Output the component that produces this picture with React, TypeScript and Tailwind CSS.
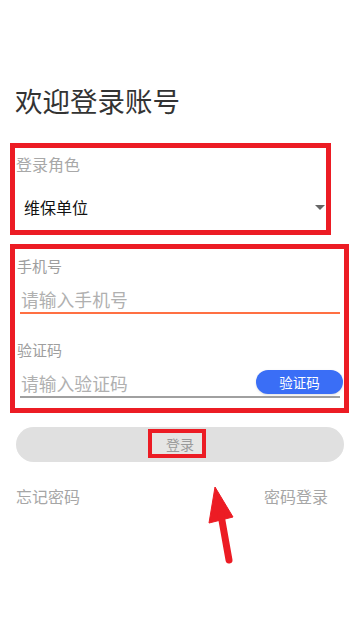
const font = { fontFamily: '"Noto Sans CJK SC", "Noto Sans", sans-serif' };

const Field = ({
  label,
  placeholder,
  line,
  action,
}: {
  label: string;
  placeholder: string;
  line: string;
  action?: string;
}) => (
  <div>
    <div className="pl-[2px] h-[20px] leading-[20px] text-[15px] text-[#9e9e9e]">{label}</div>
    <div className={`ml-[5px] mr-[4px] mt-[10px] flex items-center h-[28px] border-b-2 ${line}`}>
      <input
        className="flex-1 min-w-0 h-full pl-[1px] text-[17.8px] text-[#333] placeholder:text-[#b0b0b0] outline-none bg-transparent"
        placeholder={placeholder}
      />
      {action && (
        <button className="-mr-[3px] mb-[2px] w-[87px] h-[24px] rounded-full bg-[#3a6ef6] text-white text-[13.5px] leading-[24px] shadow-sm">
          {action}
        </button>
      )}
    </div>
  </div>
);

export default function App() {
  return (
    <div className="relative w-[360px] h-[619px] bg-white overflow-hidden" style={font}>
      <h1 className="pt-[83px] pl-[15px] h-[117px] leading-[34px] text-[27.5px] font-normal text-[#333]">
        欢迎登录账号
      </h1>

      <div className="mt-[26px] ml-[10px] w-[321px] h-[92px] border-[5px] border-[#ec1c24] pt-[6px] pl-[1px]">
        <div className="h-[20px] leading-[20px] text-[16px] text-[#a8a8a8]">登录角色</div>
        <div className="mt-[23px] h-[20px] flex items-center justify-between pl-[8px] pr-[1px]">
          <span className="text-[16px] leading-[20px] text-[#111]">维保单位</span>
          <svg width="10" height="5" viewBox="0 0 10 5">
            <path d="M0 0 H10 L5 5 Z" fill="#666" />
          </svg>
        </div>
      </div>

      <div className="mt-[9px] ml-[10px] w-[339px] h-[169px] border-[5px] border-[#ec1c24] pt-[7px]">
        <Field label="手机号" placeholder="请输入手机号" line="border-[#ff7043]" />
        <div className="mt-[26px]">
          <Field label="验证码" placeholder="请输入验证码" line="border-[#a0a0a0]" action="验证码" />
        </div>
      </div>

      <div className="mt-[14px] ml-[16px] w-[328px] h-[35px] rounded-full bg-[#e0e0e0] flex justify-center">
        <div className="mt-[2px] -ml-[6px] w-[58px] h-[29px] border-[4px] border-[#ec1c24] bg-[#e6e6e4] flex items-end pl-[14px]">
          <span className="text-[14px] leading-[19px] text-[#9a9a9a]">登录</span>
        </div>
      </div>

      <div className="mt-[24px] pl-[16px] pr-[32px] flex justify-between text-[16px] leading-[20px] text-[#a6a6a6]">
        <span>忘记密码</span>
        <span>密码登录</span>
      </div>

      <svg className="absolute left-0 top-0 pointer-events-none" width="360" height="619">
        <path d="M215 487 L209 523 L233 517 Z" fill="#ec1c24" stroke="#ec1c24" strokeWidth="1" strokeLinejoin="round" />
        <line x1="221" y1="515" x2="229" y2="560" stroke="#ec1c24" strokeWidth="7" strokeLinecap="round" />
      </svg>
    </div>
  );
}
